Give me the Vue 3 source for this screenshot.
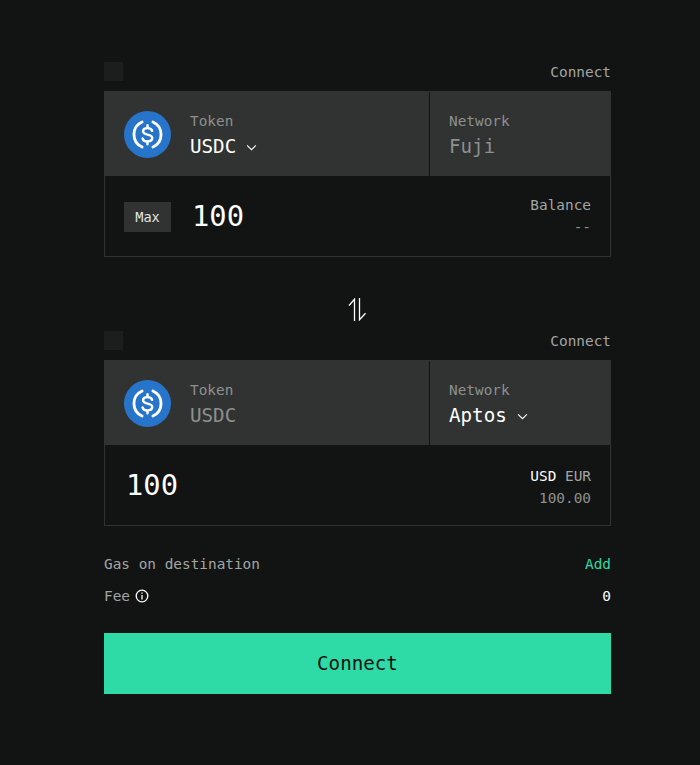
<template>
  <main class="page">
    <section class="bridge">
      <div class="wallet-row">
        <span class="wallet-mark"></span>
        <span class="wallet-link">Connect</span>
      </div>
      <div class="panel">
        <div class="panel-top">
          <div class="cell cell--token">
            <svg class="coin" viewBox="0 0 48 48">
              <circle cx="24" cy="24" r="24" fill="#2775ca" />
              <path d="M18.500 11.200a14 14 0 0 0 0 25.600M29.500 11.200a14 14 0 0 1 0 25.600" fill="none" stroke="#fff" stroke-width="2.900" stroke-linecap="round" />
              <path d="M28.700 20.300c-.4-1.800-2.100-2.800-4.700-2.800-2.700 0-4.500 1.300-4.500 3.300 0 2.100 1.700 2.800 4.500 3.300 2.900.5 4.800 1.300 4.800 3.500 0 2.100-2 3.400-4.800 3.400-2.800 0-4.600-1.100-5-3M24 14.500v3M24 31v3" fill="none" stroke="#fff" stroke-width="2.500" stroke-linecap="round" />
            </svg>
            <div class="field">
              <span class="field-label">Token</span>
              <span class="field-value">USDC <svg class="chevron" viewBox="0 0 12 8"><path d="M1 1.500l5 5 5-5" /></svg></span>
            </div>
          </div>
          <div class="cell cell--network">
            <div class="field">
              <span class="field-label">Network</span>
              <span class="field-value field-value--muted">Fuji</span>
            </div>
          </div>
        </div>
        <div class="panel-bottom">
          <button class="max-btn">Max</button>
          <span class="amount">100</span>
          <div class="side">
            <span class="side-top">Balance</span>
            <span class="side-sub">--</span>
          </div>
        </div>
      </div>

      <div class="swap">
        <svg viewBox="0 0 19 23" class="swap-icon">
          <path d="M6.500 23V1.200L1 7.500M11.500 0v21.800l6-6.500" />
        </svg>
      </div>

      <div class="wallet-row">
        <span class="wallet-mark"></span>
        <span class="wallet-link">Connect</span>
      </div>
      <div class="panel">
        <div class="panel-top">
          <div class="cell cell--token">
            <svg class="coin" viewBox="0 0 48 48">
              <circle cx="24" cy="24" r="24" fill="#2775ca" />
              <path d="M18.500 11.200a14 14 0 0 0 0 25.600M29.500 11.200a14 14 0 0 1 0 25.600" fill="none" stroke="#fff" stroke-width="2.900" stroke-linecap="round" />
              <path d="M28.700 20.300c-.4-1.800-2.100-2.800-4.700-2.800-2.700 0-4.500 1.300-4.500 3.300 0 2.100 1.700 2.800 4.500 3.300 2.900.5 4.800 1.300 4.800 3.500 0 2.100-2 3.400-4.800 3.400-2.800 0-4.600-1.100-5-3M24 14.500v3M24 31v3" fill="none" stroke="#fff" stroke-width="2.500" stroke-linecap="round" />
            </svg>
            <div class="field">
              <span class="field-label">Token</span>
              <span class="field-value field-value--muted">USDC</span>
            </div>
          </div>
          <div class="cell cell--network">
            <div class="field">
              <span class="field-label">Network</span>
              <span class="field-value">Aptos <svg class="chevron" viewBox="0 0 12 8"><path d="M1 1.500l5 5 5-5" /></svg></span>
            </div>
          </div>
        </div>
        <div class="panel-bottom panel-bottom--dest">
          <span class="amount">100</span>
          <div class="side side--dest">
            <span class="side-top"><b>USD</b> EUR</span>
            <span class="side-sub">100.00</span>
          </div>
        </div>
      </div>

      <div class="summary">
        <div class="summary-row">
          <span>Gas on destination</span>
          <span class="add">Add</span>
        </div>
        <div class="summary-row">
          <span class="fee">
            Fee
            <svg class="info" viewBox="0 0 14 14">
              <circle cx="7" cy="7" r="5.800" />
              <path d="M7 3.600v1.200M7 6v4.400" />
            </svg>
          </span>
          <span class="fee-value">0</span>
        </div>
      </div>

      <button class="connect-btn">Connect</button>
    </section>
  </main>
</template>

<script setup>
</script>

<style>
html,
body {
  margin: 0;
  background: #111413;
}
</style>

<style scoped>
.page {
  min-height: 765px;
  box-sizing: border-box;
  padding: 62px 89px 0 104px;
  background: #111413;
  font-family: "DejaVu Sans Mono", "Liberation Mono", monospace;
  color: #a3a5a4;
}

.bridge {
  width: 507px;
  display: flex;
  flex-direction: column;
}

.wallet-row {
  height: 29px;
  display: flex;
  justify-content: space-between;
  align-items: flex-start;
}

.wallet-mark {
  width: 19px;
  height: 19px;
  background: #1b1e1d;
}

.wallet-link {
  font-size: 14.400px;
  line-height: 20px;
}

.panel {
  height: 166px;
  box-sizing: border-box;
  border: 1px solid #303332;
  display: flex;
  flex-direction: column;
}

.panel-top {
  height: 84px;
  display: flex;
  background: #303332;
  flex: none;
}

.cell {
  display: flex;
  align-items: center;
}

.cell--token {
  width: 325px;
  padding-left: 19px;
  box-sizing: border-box;
  gap: 19px;
  border-right: 1px solid #111413;
}

.cell--network {
  flex: 1;
  padding-left: 19px;
}

.coin {
  width: 47px;
  height: 47px;
  flex: none;
}

.field {
  display: flex;
  flex-direction: column;
  gap: 5px;
  padding-top: 4px;
}

.field-label {
  font-size: 14.400px;
  line-height: 17px;
  color: #8d908f;
}

.field-value {
  display: flex;
  align-items: center;
  gap: 10px;
  font-size: 19.200px;
  line-height: 24px;
  color: #fff;
}

.field-value--muted {
  color: #8d908f;
}

.chevron {
  width: 11px;
  height: 7px;
  fill: none;
  stroke: #fff;
  stroke-width: 1.200;
}

.panel-bottom {
  flex: 1;
  display: flex;
  align-items: center;
  padding: 0 19px;
}

.panel-bottom--dest {
  padding-left: 21px;
}

.max-btn {
  width: 47px;
  height: 30px;
  margin: 2px 21px 0 0;
  padding: 0;
  border: 0;
  background: #303332;
  color: #e4e5e5;
  font-family: inherit;
  font-size: 13.600px;
}

.amount {
  font-size: 28.800px;
  line-height: 34px;
  color: #fff;
}

.side {
  margin-left: auto;
  display: flex;
  flex-direction: column;
  align-items: flex-end;
  gap: 3px;
  font-size: 14.400px;
  line-height: 19px;
}

.side--dest {
  padding-top: 4px;
}

.side-top b {
  font-weight: 400;
  color: #fff;
}

.side-sub {
  color: #8d908f;
}

.swap {
  height: 74px;
  display: flex;
  justify-content: center;
  align-items: flex-start;
  padding-top: 41px;
  box-sizing: border-box;
}

.swap-icon {
  width: 19px;
  height: 23px;
  fill: none;
  stroke: #fff;
  stroke-width: 1.300;
}

.summary {
  margin-top: 29px;
  display: flex;
  flex-direction: column;
  gap: 14px;
}

.summary-row {
  display: flex;
  justify-content: space-between;
  align-items: center;
  height: 18px;
  font-size: 14.400px;
}

.fee {
  display: flex;
  align-items: center;
  gap: 5px;
}

.info {
  width: 14px;
  height: 14px;
  fill: none;
  stroke: #fff;
  stroke-width: 1.300;
}

.add {
  color: #2edaa5;
}

.fee-value {
  color: #fff;
}

.connect-btn {
  margin-top: 28px;
  height: 61px;
  border: 0;
  padding: 0;
  background: #2edaa5;
  color: #111413;
  font-family: inherit;
  font-size: 19.200px;
}
</style>
